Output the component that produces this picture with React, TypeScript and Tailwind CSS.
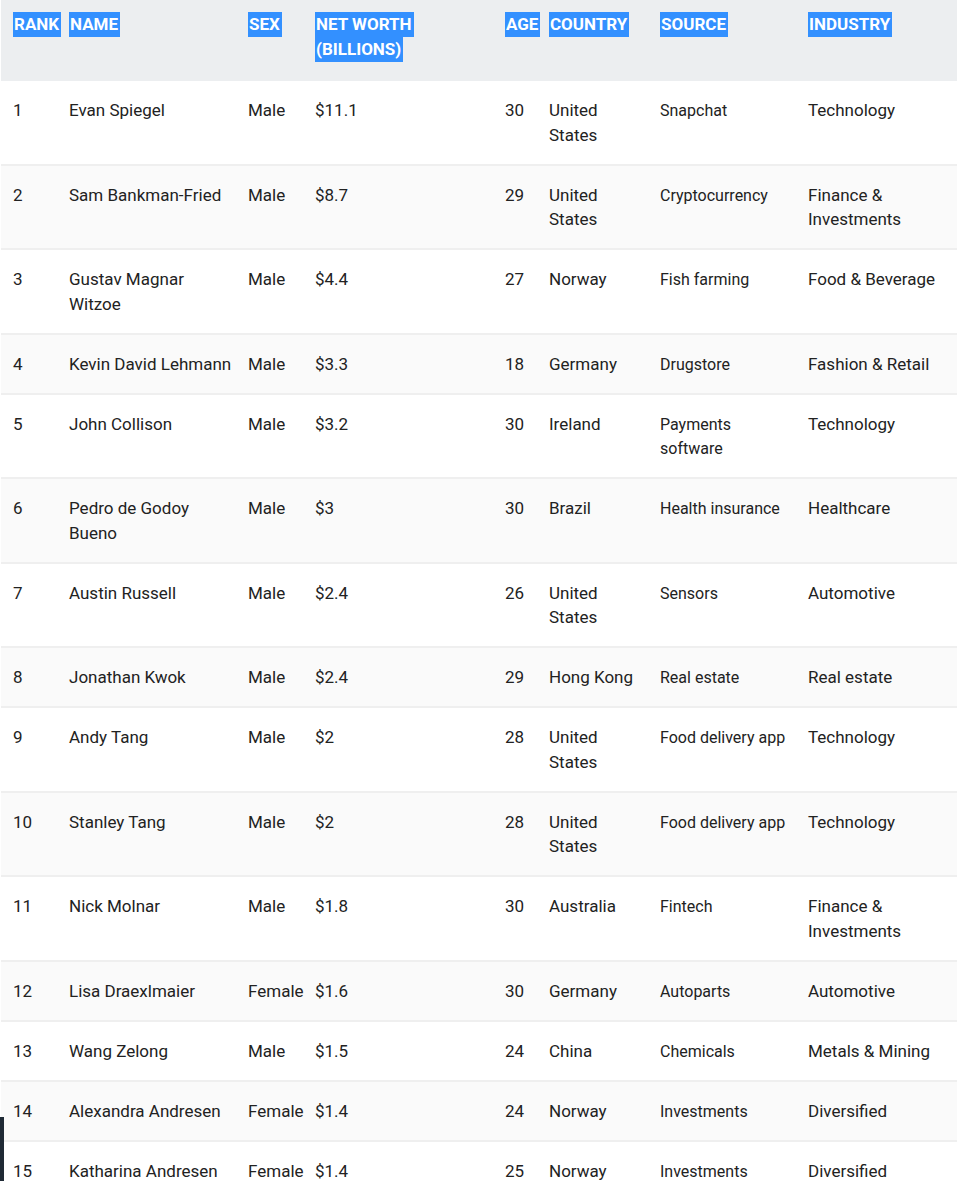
type Row = {
  rank: number;
  name: string;
  sex: string;
  worth: string;
  age: number;
  country: string;
  source: string;
  industry: string;
};

const rows: Row[] = [
  { rank: 1, name: "Evan Spiegel", sex: "Male", worth: "$11.1", age: 30, country: "United States", source: "Snapchat", industry: "Technology" },
  { rank: 2, name: "Sam Bankman-Fried", sex: "Male", worth: "$8.7", age: 29, country: "United States", source: "Cryptocurrency", industry: "Finance & Investments" },
  { rank: 3, name: "Gustav Magnar Witzoe", sex: "Male", worth: "$4.4", age: 27, country: "Norway", source: "Fish farming", industry: "Food & Beverage" },
  { rank: 4, name: "Kevin David Lehmann", sex: "Male", worth: "$3.3", age: 18, country: "Germany", source: "Drugstore", industry: "Fashion & Retail" },
  { rank: 5, name: "John Collison", sex: "Male", worth: "$3.2", age: 30, country: "Ireland", source: "Payments software", industry: "Technology" },
  { rank: 6, name: "Pedro de Godoy Bueno", sex: "Male", worth: "$3", age: 30, country: "Brazil", source: "Health insurance", industry: "Healthcare" },
  { rank: 7, name: "Austin Russell", sex: "Male", worth: "$2.4", age: 26, country: "United States", source: "Sensors", industry: "Automotive" },
  { rank: 8, name: "Jonathan Kwok", sex: "Male", worth: "$2.4", age: 29, country: "Hong Kong", source: "Real estate", industry: "Real estate" },
  { rank: 9, name: "Andy Tang", sex: "Male", worth: "$2", age: 28, country: "United States", source: "Food delivery app", industry: "Technology" },
  { rank: 10, name: "Stanley Tang", sex: "Male", worth: "$2", age: 28, country: "United States", source: "Food delivery app", industry: "Technology" },
  { rank: 11, name: "Nick Molnar", sex: "Male", worth: "$1.8", age: 30, country: "Australia", source: "Fintech", industry: "Finance & Investments" },
  { rank: 12, name: "Lisa Draexlmaier", sex: "Female", worth: "$1.6", age: 30, country: "Germany", source: "Autoparts", industry: "Automotive" },
  { rank: 13, name: "Wang Zelong", sex: "Male", worth: "$1.5", age: 24, country: "China", source: "Chemicals", industry: "Metals & Mining" },
  { rank: 14, name: "Alexandra Andresen", sex: "Female", worth: "$1.4", age: 24, country: "Norway", source: "Investments", industry: "Diversified" },
  { rank: 15, name: "Katharina Andresen", sex: "Female", worth: "$1.4", age: 25, country: "Norway", source: "Investments", industry: "Diversified" },
];

function Mark({ children }: { children: React.ReactNode }) {
  return (
    <span className="block w-fit bg-[#3390ff] pl-[1px] pr-[2px] leading-[25px] text-white">
      {children}
    </span>
  );
}

export default function App() {
  return (
    <div className="relative min-h-[1198px] bg-white font-['Roboto',sans-serif] text-[17px] text-[#222]">
      <table className="ml-[1px] w-[956px] table-fixed border-collapse">
        <colgroup>
          <col className="w-[56px]" />
          <col className="w-[179px]" />
          <col className="w-[67px]" />
          <col className="w-[190px]" />
          <col className="w-[44px]" />
          <col className="w-[111px]" />
          <col className="w-[148px]" />
          <col className="w-[161px]" />
        </colgroup>
        <thead>
          <tr className="bg-[#eceef0] text-left align-top font-bold uppercase">
            <th className="pl-[12px] pt-[12px] pb-[19px]"><Mark>Rank</Mark></th>
            <th className="pl-[12px] pt-[12px] pb-[19px]"><Mark>Name</Mark></th>
            <th className="pl-[12px] pt-[12px] pb-[19px]"><Mark>Sex</Mark></th>
            <th className="pl-[12px] pt-[12px] pb-[19px]">
              <Mark>Net Worth</Mark>
              <Mark>(Billions)</Mark>
            </th>
            <th className="pl-[12px] pt-[12px] pb-[19px]"><Mark>Age</Mark></th>
            <th className="pl-[12px] pt-[12px] pb-[19px]"><Mark>Country</Mark></th>
            <th className="pl-[12px] pt-[12px] pb-[19px]"><Mark>Source</Mark></th>
            <th className="pl-[12px] pt-[12px] pb-[19px]"><Mark>Industry</Mark></th>
          </tr>
        </thead>
        <tbody>
          {rows.map((r, i) => (
            <tr
              key={r.rank}
              className={`align-top leading-[24.5px] ${i > 0 ? "border-t-2 border-[#efefef]" : ""} ${i % 2 === 1 ? "bg-[#fafafa]" : "bg-white"}`}
            >
              <td className="pl-[12px] pt-[17px] pb-[16.5px]">{r.rank}</td>
              <td className="pl-[12px] pt-[17px] pb-[16.5px]">{r.name}</td>
              <td className="pl-[12px] pt-[17px] pb-[16.5px]">{r.sex}</td>
              <td className="pl-[12px] pt-[17px] pb-[16.5px]">{r.worth}</td>
              <td className="pl-[12px] pt-[17px] pb-[16.5px]">{r.age}</td>
              <td className="pl-[12px] pt-[17px] pb-[16.5px]">{r.country}</td>
              <td className="pl-[12px] pt-[18px] pb-[15.5px] text-[16px]">{r.source}</td>
              <td className="pl-[12px] pt-[17px] pb-[16.5px]">{r.industry}</td>
            </tr>
          ))}
        </tbody>
      </table>

      {/* dark scroll marker at the bottom left */}
      <div className="absolute left-0 top-[1117px] h-[64px] w-[4px] bg-[#1f2a35]" />
    </div>
  );
}
